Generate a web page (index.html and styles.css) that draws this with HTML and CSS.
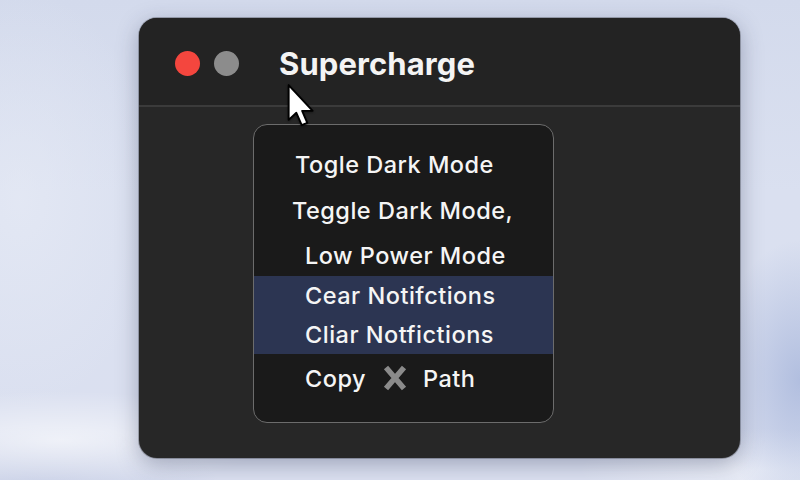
FILE: index.html
```html
<!DOCTYPE html>
<html lang="en">
<head>
<meta charset="utf-8">
<title>Supercharge</title>
<link rel="stylesheet" href="styles.css">
</head>
<body>
<div class="desktop">
  <div class="window">
    <header class="titlebar">
      <div class="lights">
        <span class="light light--close"></span>
        <span class="light light--min"></span>
      </div>
      <h1 class="title">Supercharge</h1>
    </header>
    <main class="content">
      <div class="menu">
        <div class="item item--a">Togle Dark Mode</div>
        <div class="item item--b">Teggle Dark Mode,</div>
        <div class="item">Low Power Mode</div>
        <div class="group">
          <div class="item item--hl">Cear Notifctions</div>
          <div class="item item--hl">Cliar Notfictions</div>
        </div>
        <div class="item item--last">
          <span>Copy</span>
          <svg class="xicon" viewBox="0 0 28 28" width="28" height="28" aria-hidden="true">
            <path d="M5 3.5 L23 24.5 M23 3.5 L5 24.5" stroke="#8b8b8b" stroke-width="5.5" stroke-linecap="butt"/>
          </svg>
          <span>Path</span>
        </div>
      </div>
    </main>
    <svg class="cursor" viewBox="0 0 14 21" width="31" height="45" aria-hidden="true">
      <path d="M1 1 L1 17.2 L4.6 13.9 L7.1 19.7 L9.7 18.6 L7.3 13 L12.2 13 Z" fill="#fff" stroke="#000" stroke-width="0.9" stroke-linejoin="round"/>
    </svg>
  </div>
</div>
</body>
</html>
```

FILE: styles.css
```css
* { box-sizing: border-box; }

html, body {
  margin: 0;
  padding: 0;
}

body {
  width: 800px;
  height: 480px;
  overflow: hidden;
  font-family: "Inter", "Noto Sans", "Liberation Sans", sans-serif;
}

.desktop {
  width: 800px;
  height: 480px;
  padding: 18px 0 0 139px;
  background:
    radial-gradient(ellipse 300px 70px at 60px 440px, rgba(255,255,255,0.6), rgba(255,255,255,0) 70%),
    radial-gradient(ellipse 260px 90px at 40px 490px, rgba(180,190,220,0.55), rgba(180,190,220,0) 70%),
    radial-gradient(ellipse 120px 200px at 800px 380px, rgba(150,168,212,0.6), rgba(150,168,212,0) 70%),
    radial-gradient(ellipse 260px 60px at 760px 470px, rgba(245,247,252,0.6), rgba(245,247,252,0) 70%),
    radial-gradient(ellipse 200px 300px at 20px 200px, rgba(232,236,246,0.6), rgba(232,236,246,0) 70%),
    linear-gradient(180deg, #d3daec 0%, #dae0f0 40%, #dbe0f0 100%);
}

.window {
  position: relative;
  width: 601px;
  height: 440px;
  border-radius: 18px;
  background: #272727;
  box-shadow: 0 6px 22px rgba(40, 50, 80, 0.35), 0 0 0 1px rgba(0,0,0,0.25);
  display: flex;
  flex-direction: column;
  overflow: hidden;
}

.titlebar {
  height: 89px;
  flex: none;
  background: #232323;
  border-bottom: 2px solid #3b3b3b;
  display: flex;
  align-items: center;
  padding: 4px 0 0 36px;
}

.lights {
  display: flex;
  gap: 14px;
}

.light {
  width: 25px;
  height: 25px;
  border-radius: 50%;
  display: block;
}

.light--close { background: #f4463e; }
.light--min { background: #8c8c8c; }

.title {
  margin: 0 0 0 40px;
  font-size: 31px;
  font-weight: 700;
  color: #f4f4f4;
  letter-spacing: 0.1px;
}

.content {
  flex: 1;
  padding: 17px 0 0 114px;
}

.menu {
  width: 301px;
  height: 299px;
  background: #1a1a1a;
  border: 1.5px solid #6c6c6c;
  border-radius: 14px;
  padding-top: 18px;
  overflow: hidden;
  display: flex;
  flex-direction: column;
}

.item {
  height: 44px;
  display: flex;
  align-items: center;
  padding-left: 51px;
  font-size: 23.5px;
  font-weight: 500;
  letter-spacing: 0.5px;
  color: #f5f5f5;
  white-space: nowrap;
}

.item--a { padding-left: 41px; height: 43px; }
.item--b { padding-left: 38px; height: 48px; }
.item--b + .item { height: 42px; }

.group {
  background: #2c3552;
}

.item--hl { height: 39px; }

.item--last {
  height: 48px;
  gap: 14px;
}

.xicon { display: block; margin: 0 0 0 1px; }

.cursor {
  position: absolute;
  left: 147px;
  top: 65px;
  filter: drop-shadow(0 1px 1px rgba(0,0,0,0.4));
}
```
